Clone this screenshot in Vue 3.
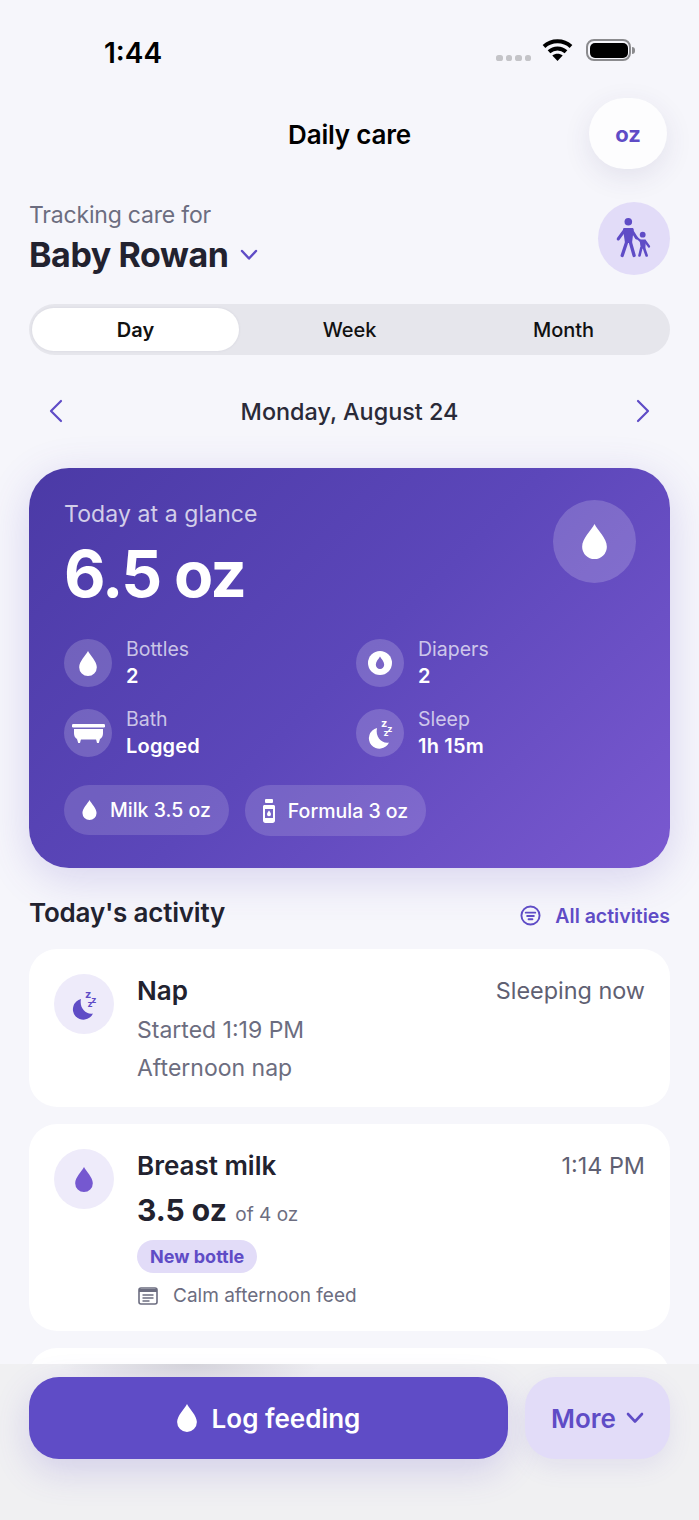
<template>
  <div class="screen">
    <!-- status bar -->
    <div class="status">
      <span class="clock">1:44</span>
      <div class="status-right">
        <div class="signal"><i v-for="n in 4" :key="n"></i></div>
        <svg class="wifi" viewBox="0 0 30 22" width="31" height="22">
          <path d="M1.500 7.500C9 .6 21 .6 28.500 7.500" fill="none" stroke="#000" stroke-width="4" />
          <path d="M6.500 12.800c5-4.400 12-4.400 17 0" fill="none" stroke="#000" stroke-width="4" />
          <path d="M15 22l-5.200-5.400c3-2.500 7.400-2.500 10.400 0z" fill="#000" />
        </svg>
        <div class="battery"><div class="battery-fill"></div></div>
        <div class="battery-cap"></div>
      </div>
    </div>

    <!-- header -->
    <header class="topbar">
      <h1>Daily care</h1>
      <button class="unit-btn">oz</button>
    </header>

    <div class="child-row">
      <div>
        <div class="child-label">Tracking care for</div>
        <div class="child-name">
          Baby Rowan
          <svg viewBox="0 0 18 12" width="18" height="12"><path d="M2 2l7 7.500L16 2" fill="none" stroke="#5f4cc6" stroke-width="2.400" stroke-linecap="round" stroke-linejoin="round" /></svg>
        </div>
      </div>
      <div class="family-btn">
        <svg viewBox="0 0 36 42" width="36" height="42" fill="#5f4cc6">
          <circle cx="12.300" cy="5.700" r="3.800" />
          <path d="M8.500 12h7.600c1 0 1.600.5 1.600 1.500L16 27H9L7 13.500c0-1 .5-1.500 1.500-1.500z" />
          <circle cx="26.700" cy="18.700" r="2.900" />
          <path d="M24.300 23.500h4.600c.6 0 1 .4 1 1l-.6 8H24.800l-1.200-8c0-.6.200-1 .7-1z" />
          <g fill="none" stroke="#5f4cc6" stroke-linecap="round">
            <path d="M8.800 14L2.200 23M15.500 14l5 8" stroke-width="3" />
            <path d="M10.700 26L6.200 39.500M14.300 26l3.800 13.500" stroke-width="3.300" />
            <path d="M24.500 25l-4-3.500M29 25l4 5.500" stroke-width="2.300" />
            <path d="M25.300 32L23.500 39.500M28 32l2.600 7.500" stroke-width="2.600" />
          </g>
        </svg>
      </div>
    </div>

    <!-- range tabs -->
    <div class="tabs">
      <button v-for="t in tabs" :key="t" class="tab" :class="{ active: t === 'Day' }">{{ t }}</button>
    </div>

    <div class="date-row">
      <svg viewBox="0 0 14 24" width="14" height="24"><path d="M12 2L2 12l10 10" fill="none" stroke="#5f4cc6" stroke-width="2.200" stroke-linecap="round" stroke-linejoin="round" /></svg>
      <span>Monday, August 24</span>
      <svg viewBox="0 0 14 24" width="14" height="24"><path d="M2 2l10 10L2 22" fill="none" stroke="#5f4cc6" stroke-width="2.200" stroke-linecap="round" stroke-linejoin="round" /></svg>
    </div>

    <!-- summary card -->
    <section class="glance">
      <div class="glance-top">
        <div>
          <div class="glance-label">Today at a glance</div>
          <div class="glance-total">6.5 oz</div>
        </div>
        <div class="glance-icon">
          <svg viewBox="0 0 24 34" width="25" height="35"><path :d="drop" fill="#fff" /></svg>
        </div>
      </div>

      <div class="stats">
        <div v-for="s in stats" :key="s.label" class="stat">
          <div class="stat-icon">
            <svg v-if="s.icon === 'bottle'" viewBox="0 0 24 34" width="18" height="25"><path :d="drop" fill="#fff" /></svg>
            <svg v-else-if="s.icon === 'diaper'" viewBox="0 0 24 24" width="24" height="24">
              <circle cx="12" cy="12" r="12" fill="#fff" />
              <path d="M12 5.500c-1.400 2.500-4.200 5-4.200 8.300a4.200 4.200 0 0 0 8.400 0c0-3.300-2.800-5.800-4.200-8.300z" fill="#7a64c6" />
            </svg>
            <svg v-else-if="s.icon === 'bath'" viewBox="0 0 33 19" width="33" height="19" fill="#fff">
              <rect x="0" y="0" width="33" height="3.500" rx="1.200" />
              <path d="M2 5h29v4c0 4.500-2.500 6.500-6 6.500H8C4.500 15.500 2 13.500 2 9z" />
              <path d="M5 15h4l-1 4H6.200zM24 15h4l-1.200 4H25z" />
            </svg>
            <svg v-else viewBox="0 0 36 36" width="36" height="36" class="moon">
              <path :d="moon" fill="#fff" />
              <text x="19" y="12" class="zz z1">z<tspan dx="0" dy="5" class="z2">z</tspan><tspan dx="-9" dy="4" class="z2">z</tspan></text>
            </svg>
          </div>
          <div>
            <div class="stat-label">{{ s.label }}</div>
            <div class="stat-value">{{ s.value }}</div>
          </div>
        </div>
      </div>

      <div class="pills">
        <div class="pill">
          <svg viewBox="0 0 24 34" width="15" height="20"><path :d="drop" fill="#fff" /></svg>
          Milk 3.5 oz
        </div>
        <div class="pill pill-formula">
          <svg viewBox="0 0 12 24" width="12" height="24" fill="#fff">
            <rect x="2" y="0" width="8" height="4" rx="1" />
            <path fill-rule="evenodd" d="M1.500 6h9c.8 0 1.500.7 1.500 1.500v14c0 1.400-1 2.500-2.500 2.500h-7C1 24 0 22.900 0 21.500v-14C0 6.700.7 6 1.500 6zM2 10v9h8v-9z" />
            <path d="M6 11.500c-.6 1.100-2 2.200-2 3.700a2 2 0 0 0 4 0c0-1.500-1.400-2.600-2-3.700z" />
          </svg>
          Formula 3 oz
        </div>
      </div>
    </section>

    <!-- activity -->
    <div class="section-head">
      <h2>Today's activity</h2>
      <div class="all-link">
        <svg viewBox="0 0 22 22" width="21" height="21" fill="none" stroke="#5f4cc6" stroke-width="2" stroke-linecap="round">
          <circle cx="11" cy="11" r="9.500" />
          <path d="M6 8h10M7.500 11.500h7M9 15h4" />
        </svg>
        All activities
      </div>
    </div>

    <article class="entry nap">
      <div class="entry-icon">
        <svg viewBox="0 0 36 36" width="36" height="36" class="moon">
          <path :d="moon" fill="#5f4cc6" />
          <text x="19" y="12" class="zz z1 purple">z<tspan dx="0" dy="5" class="z2">z</tspan><tspan dx="-9" dy="4" class="z2">z</tspan></text>
        </svg>
      </div>
      <div class="entry-body">
        <div class="entry-head">
          <span class="entry-title">Nap</span>
          <span class="entry-side">Sleeping now</span>
        </div>
        <div class="entry-line">Started 1:19 PM</div>
        <div class="entry-line">Afternoon nap</div>
      </div>
    </article>

    <article class="entry feed">
      <div class="entry-icon">
        <svg viewBox="0 0 24 34" width="18" height="25"><path :d="drop" fill="#7558d0" /></svg>
      </div>
      <div class="entry-body">
        <div class="entry-head">
          <span class="entry-title">Breast milk</span>
          <span class="entry-side">1:14 PM</span>
        </div>
        <div class="amount"><b>3.5 oz</b> <span>of 4 oz</span></div>
        <div class="tag">New bottle</div>
        <div class="note">
          <svg viewBox="0 0 20 18" width="20" height="18" fill="none" stroke="#6c6d80" stroke-width="1.600">
            <rect x="1" y="1" width="18" height="16" rx="2" />
            <path d="M1 3.500h18" stroke-width="3" />
            <path d="M4.500 8h11M4.500 11h11M4.500 14h7" stroke-width="1.300" />
          </svg>
          Calm afternoon feed
        </div>
      </div>
    </article>

    <article class="entry stub"></article>

    <!-- bottom actions, sits over the list -->
    <footer class="actions">
      <button class="log-btn">
        <svg viewBox="0 0 24 34" width="20" height="28"><path :d="drop" fill="#fff" /></svg>
        Log feeding
      </button>
      <button class="more-btn">
        More
        <svg viewBox="0 0 18 12" width="18" height="12"><path d="M2 2l7 7.500L16 2" fill="none" stroke="#5f4cc6" stroke-width="2.600" stroke-linecap="round" stroke-linejoin="round" /></svg>
      </button>
    </footer>
  </div>
</template>

<script setup>
const drop = 'M12 0C9 6 0 14 0 22a12 12 0 0 0 24 0C24 14 15 6 12 0Z'
const moon = 'M15 13a10.500 10.500 0 1 0 12 14.500C20 29 13 22 15 13z'

const tabs = ['Day', 'Week', 'Month']

const stats = [
  { label: 'Bottles', value: '2', icon: 'bottle' },
  { label: 'Diapers', value: '2', icon: 'diaper' },
  { label: 'Bath', value: 'Logged', icon: 'bath' },
  { label: 'Sleep', value: '1h 15m', icon: 'sleep' }
]
</script>

<style>
body {
  background: #f6f6fb;
}
</style>

<style scoped>
.screen {
  position: relative;
  width: 699px;
  height: 1520px;
  overflow: hidden;
  box-sizing: border-box;
  padding: 0 29px;
  background: #f6f6fb;
  font-family: Inter, "Noto Sans", sans-serif;
  color: #22222f;
}

button {
  border: 0;
  font-family: inherit;
  padding: 0;
}

.status {
  display: flex;
  justify-content: space-between;
  align-items: center;
  height: 98px;
  padding: 8px 35px 0 75px;
  box-sizing: border-box;
}

.clock {
  font-size: 28px;
  font-weight: 600;
  color: #000;
}

.status-right {
  display: flex;
  align-items: center;
  margin-top: -6px;
}

.signal {
  display: flex;
  gap: 3px;
  margin: 16px 11px 0 0;
}

.signal i {
  width: 6.500px;
  height: 6.500px;
  border-radius: 40%;
  background: #c4c4c8;
}

.wifi {
  margin-right: 13px;
}

.battery {
  width: 45px;
  height: 22px;
  box-sizing: border-box;
  border: 2px solid #8b8b8e;
  border-radius: 8px;
  padding: 1.500px;
}

.battery-fill {
  height: 100%;
  background: #000;
  border-radius: 5px;
}

.battery-cap {
  width: 3px;
  height: 7px;
  margin-left: 1px;
  background: #8b8b8e;
  border-radius: 0 3px 3px 0;
}

.topbar {
  position: relative;
  display: flex;
  align-items: center;
  justify-content: center;
  height: 71px;
}

h1 {
  margin: 2px 0 0;
  font-size: 26px;
  font-weight: 600;
  color: #000;
  letter-spacing: -0.2px;
}

.unit-btn {
  position: absolute;
  right: 3px;
  top: 0;
  width: 78px;
  height: 71px;
  border-radius: 36px;
  background: #fdfdfe;
  color: #5f4cc6;
  font-size: 22px;
  font-weight: 700;
  box-shadow: 0 8px 28px rgba(60, 50, 110, 0.1);
}

.child-row {
  display: flex;
  justify-content: space-between;
  align-items: flex-start;
  margin-top: 32px;
}

.child-label {
  font-size: 23px;
  line-height: 28px;
  color: #6c6d80;
  letter-spacing: -0.2px;
}

.child-name {
  display: flex;
  align-items: center;
  gap: 11px;
  margin-top: 6px;
  font-size: 34px;
  line-height: 40px;
  font-weight: 700;
  letter-spacing: -0.4px;
}

.family-btn {
  display: flex;
  align-items: center;
  justify-content: center;
  width: 72px;
  height: 73px;
  margin-top: 1px;
  border-radius: 50%;
  background: #e2dcf8;
}

.family-btn svg {
  margin-top: -3px;
}

.tabs {
  display: flex;
  gap: 7px;
  height: 51px;
  margin-top: 29px;
  padding: 4px 3px;
  box-sizing: border-box;
  border-radius: 26px;
  background: #e6e6ec;
}

.tab {
  flex: 1;
  border-radius: 22px;
  background: transparent;
  font-size: 20px;
  font-weight: 500;
  color: #111;
}

.tab.active {
  background: #fff;
  font-weight: 600;
  box-shadow: 0 0 3px rgba(40, 40, 80, 0.08);
}

.date-row {
  display: flex;
  justify-content: space-between;
  align-items: center;
  height: 32px;
  margin-top: 40px;
  padding: 0 20px;
  font-size: 23.400px;
  font-weight: 500;
  color: #2a2a38;
}

.glance {
  margin-top: 41px;
  height: 400px;
  box-sizing: border-box;
  padding: 32px 35px 0;
  border-radius: 40px;
  color: #fff;
  background: linear-gradient(135deg, #4b3aa6 0%, #5c47ba 50%, #7a59d0 100%);
  box-shadow: 0 10px 44px rgba(90, 70, 190, 0.2);
}

.glance-top {
  display: flex;
  justify-content: space-between;
  height: 139px;
}

.glance-label {
  font-size: 23px;
  line-height: 28px;
  letter-spacing: 0.1px;
  color: rgba(255, 255, 255, 0.75);
}

.glance-total {
  margin-top: 8px;
  font-size: 64px;
  line-height: 76px;
  font-weight: 700;
  letter-spacing: -1.7px;
}

.glance-icon {
  display: flex;
  align-items: center;
  justify-content: center;
  width: 83px;
  height: 83px;
  margin-right: -1px;
  border-radius: 50%;
  background: rgba(255, 255, 255, 0.18);
}

.stats {
  display: grid;
  grid-template-columns: 292px 1fr;
  row-gap: 20px;
  margin-top: -1px;
}

.stat {
  display: flex;
  align-items: center;
  gap: 14px;
}

.stat-icon {
  display: flex;
  align-items: center;
  justify-content: center;
  width: 48px;
  height: 48px;
  border-radius: 50%;
  background: rgba(255, 255, 255, 0.18);
}

.stat-label {
  font-size: 19.500px;
  line-height: 22px;
  color: rgba(255, 255, 255, 0.7);
}

.stat-value {
  margin-top: 4px;
  font-size: 20px;
  line-height: 24px;
  font-weight: 600;
  letter-spacing: 0.2px;
}

.moon {
  overflow: visible;
}

.zz {
  fill: #fff;
  font-weight: 700;
}

.zz.purple {
  fill: #5f4cc6;
}

.z1 {
  font-size: 11px;
}

.z2 {
  font-size: 9px;
}

.pills {
  display: flex;
  align-items: flex-start;
  gap: 16px;
  margin-top: 27px;
}

.pill {
  display: flex;
  align-items: center;
  gap: 13px;
  height: 50px;
  padding: 0 18px;
  border-radius: 25px;
  background: rgba(255, 255, 255, 0.15);
  font-size: 19.500px;
  font-weight: 500;
}

.pill-formula {
  height: 51px;
}

.section-head {
  display: flex;
  justify-content: space-between;
  align-items: center;
  margin-top: 24px;
  height: 40px;
}

h2 {
  margin: 0;
  font-size: 26px;
  font-weight: 600;
  letter-spacing: -0.2px;
}

.all-link {
  display: flex;
  align-items: center;
  gap: 14px;
  margin-top: 7px;
  font-size: 19.500px;
  font-weight: 600;
  color: #5f4cc6;
}

.entry {
  display: flex;
  gap: 23px;
  box-sizing: border-box;
  margin-top: 17px;
  padding: 25px;
  border-radius: 28px;
  background: #fff;
}

.feed {
  height: 207px;
}

.nap {
  height: 158px;
}

.stub {
  height: 100px;
}

.entry-icon {
  display: flex;
  align-items: center;
  justify-content: center;
  flex: none;
  width: 60px;
  height: 60px;
  border-radius: 50%;
  background: #eeebfa;
}

.entry-body {
  flex: 1;
}

.entry-head {
  display: flex;
  justify-content: space-between;
  align-items: center;
  height: 32px;
}

.entry-title {
  font-size: 26px;
  font-weight: 600;
}

.entry-side {
  font-size: 23.400px;
  color: #5f6072;
}

.entry-line {
  margin-top: 10px;
  font-size: 23px;
  line-height: 28px;
  color: #6c6d80;
}

.amount {
  margin-top: 10px;
  line-height: 38px;
}

.amount b {
  font-size: 30px;
  font-weight: 700;
}

.amount span {
  margin-left: 4px;
  font-size: 19px;
  color: #6c6d80;
}

.tag {
  display: inline-block;
  margin-top: 6px;
  padding: 0 13px;
  height: 33px;
  line-height: 33px;
  border-radius: 17px;
  background: #e2dcf8;
  color: #5f4cc6;
  font-size: 18px;
  font-weight: 700;
}

.note {
  display: flex;
  align-items: center;
  gap: 15px;
  margin-top: 10px;
  margin-left: 1px;
  font-size: 19px;
  line-height: 26px;
  color: #6c6d80;
}

.actions {
  position: absolute;
  left: 0;
  right: 0;
  bottom: 0;
  display: flex;
  gap: 17px;
  height: 156px;
  box-sizing: border-box;
  padding: 13px 29px 0;
  background: radial-gradient(ellipse 130px 26px at 190px 0, rgba(110, 105, 125, 0.2), transparent), #f0f0f2;
}

.log-btn {
  display: flex;
  align-items: center;
  justify-content: center;
  gap: 15px;
  flex: 1;
  height: 82px;
  border-radius: 30px;
  background: #5f4cc6;
  color: #fff;
  font-size: 26px;
  font-weight: 600;
  box-shadow: 0 12px 36px rgba(95, 76, 198, 0.2);
}

.more-btn {
  display: flex;
  align-items: center;
  justify-content: center;
  gap: 10px;
  flex: none;
  width: 145px;
  height: 82px;
  border-radius: 30px;
  background: #e2dcf8;
  color: #5f4cc6;
  font-size: 26px;
  font-weight: 600;
  box-shadow: 0 8px 24px rgba(95, 76, 198, 0.1);
}
</style>
